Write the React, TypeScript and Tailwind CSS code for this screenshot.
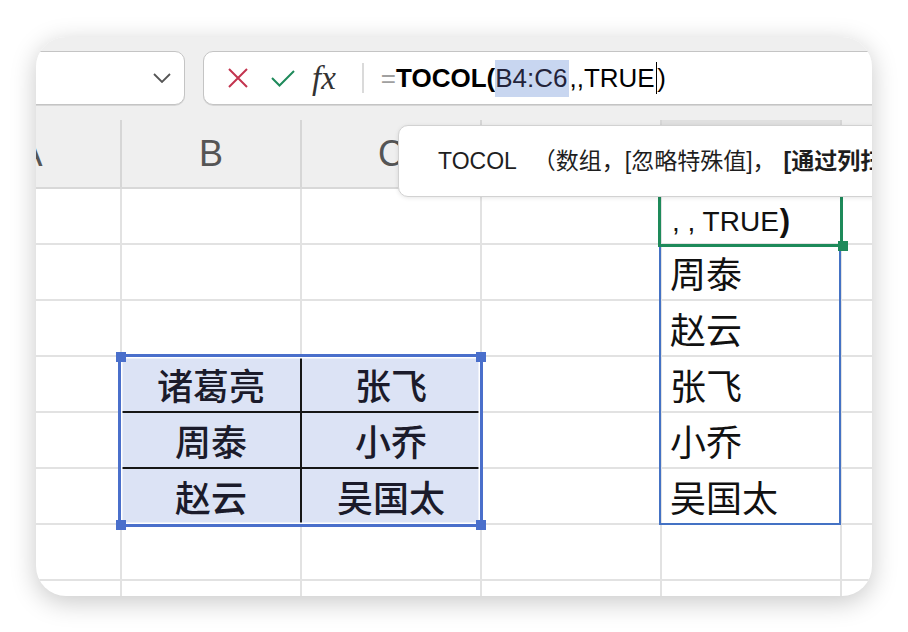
import clsx from "clsx";

type RowData = {
  b?: string;
  c?: string;
  e?: string;
  table?: boolean;
  blackBottom?: boolean;
  edit?: boolean;
};

const rows: RowData[] = [
  { edit: true },
  { e: "周泰" },
  { e: "赵云" },
  { b: "诸葛亮", c: "张飞", e: "张飞", table: true, blackBottom: true },
  { b: "周泰", c: "小乔", e: "小乔", table: true, blackBottom: true },
  { b: "赵云", c: "吴国太", e: "吴国太", table: true },
  {},
  {},
];

function TableCell({ text, blackBottom, blackRight }: { text?: string; blackBottom?: boolean; blackRight?: boolean }) {
  return (
    <div
      className={clsx(
        "w-[180px] shrink-0 flex items-center justify-center bg-[#dce3f5] border-r-2 border-b-2 text-[36px] leading-none font-medium text-[#1b1b2b] font-['Noto_Sans_CJK_SC',sans-serif]",
        blackRight ? "border-r-[#161616]" : "border-r-[#e2e2e2]",
        blackBottom ? "border-b-[#161616]" : "border-b-[#e2e2e2]"
      )}
    >
      {text}
    </div>
  );
}

function GridRow({ b, c, e, table, blackBottom, edit }: RowData) {
  return (
    <div className="flex h-[56px] shrink-0 -ml-[95px]">
      <div className="w-[181px] shrink-0 border-r-2 border-b-2 border-[#e2e2e2]" />
      {table ? (
        <>
          <TableCell text={b} blackBottom={blackBottom} blackRight />
          <TableCell text={c} blackBottom={blackBottom} />
        </>
      ) : (
        <>
          <div className="w-[180px] shrink-0 border-r-2 border-b-2 border-[#e2e2e2]" />
          <div className="w-[180px] shrink-0 border-r-2 border-b-2 border-[#e2e2e2]" />
        </>
      )}
      <div className="w-[180px] shrink-0 border-r-2 border-b-2 border-[#e2e2e2]" />
      <div className="w-[180px] shrink-0 border-r-2 border-b-2 border-[#e2e2e2] flex items-center">
        {edit ? (
          <span className="pl-[10px] pt-[8px] text-[28px] leading-none text-[#111] font-['Liberation_Sans',sans-serif] whitespace-pre">
            , , TRUE<span className="font-bold text-[31px] ml-[1px]">)</span>
          </span>
        ) : (
          <span className="pl-[8px] text-[36px] leading-none text-[#111] font-['Noto_Sans_CJK_SC',sans-serif]">{e}</span>
        )}
      </div>
      <div className="flex-1 border-b-2 border-[#e2e2e2]" />
    </div>
  );
}

function HeaderCell({ label, w, active }: { label: string; w: string; active?: boolean }) {
  return (
    <div
      className={clsx(
        "shrink-0 h-full flex items-center justify-center border-r-2 border-[#d6d6d6] text-[36px] leading-none text-[#555] font-['Liberation_Sans',sans-serif]",
        w,
        active ? "bg-[#e0e0e0]" : "bg-[#efefef]"
      )}
    >
      {label}
    </div>
  );
}

export default function App() {
  return (
    <div className="w-[908px] h-[632px] bg-white pt-[37px] pl-[36px]">
      <div className="relative w-[836px] h-[559px] rounded-[30px] overflow-hidden bg-white shadow-[0_6px_26px_rgba(0,0,0,0.22)] flex flex-col">
        {/* formula bar */}
        <div className="h-[83px] shrink-0 bg-[#efefef] flex items-start pt-[14px] gap-[18px]">
          <div className="-ml-[20px] w-[169px] h-[54px] shrink-0 bg-white rounded-[10px] border-[1.5px] border-[#c4c4c4] shadow-[0_1px_0_rgba(0,0,0,0.1)] flex items-center justify-end pr-[13px]">
            <svg width="18" height="10" viewBox="0 0 18 10" fill="none">
              <polyline points="1,1 9,9 17,1" stroke="#555" strokeWidth="1.8" />
            </svg>
          </div>
          <div className="flex-1 -mr-[20px] h-[54px] bg-white rounded-[10px] border-[1.5px] border-[#c4c4c4] shadow-[0_1px_0_rgba(0,0,0,0.1)] flex items-center">
            <svg className="ml-[24px] shrink-0" width="20" height="20" viewBox="0 0 20 20" fill="none">
              <path d="M1 1 L19 19 M19 1 L1 19" stroke="#c3344f" strokeWidth="2" />
            </svg>
            <svg className="ml-[23px] shrink-0" width="24" height="17" viewBox="0 0 24 17" fill="none">
              <polyline points="1,8 8.5,15.5 23,1" stroke="#1f8a5b" strokeWidth="2" />
            </svg>
            <span className="ml-[17px] text-[33px] leading-none italic text-[#333] font-['Liberation_Serif',serif]">
              fx
            </span>
            <div className="ml-[26px] w-[2px] h-[30px] bg-[#dadada]" />
            <div className="ml-[17px] flex items-center text-[26px] font-['Liberation_Sans',sans-serif] text-black">
              <span className="text-[#a0a0a0]">=</span>
              <span className="font-bold">TOCOL(</span>
              <span className="inline-block h-[37px] leading-[37px] bg-[#c8d6f0] text-[#23233a] pr-[2px]">B4:C6</span>
              <span>,,TRUE</span>
              <span className="inline-block w-[1.5px] h-[32px] bg-black ml-[1px]" />
              <span>)</span>
            </div>
          </div>
        </div>

        {/* column headers */}
        <div className="h-[69px] shrink-0 flex -ml-[95px] border-b-2 border-[#d8d8d8] bg-[#efefef]">
          <HeaderCell label="A" w="w-[181px]" />
          <HeaderCell label="B" w="w-[180px]" />
          <HeaderCell label="C" w="w-[180px]" />
          <HeaderCell label="D" w="w-[180px]" />
          <HeaderCell label="E" w="w-[180px]" active />
          <div className="flex-1 h-full bg-[#efefef]" />
        </div>

        {/* grid */}
        {rows.map((r, i) => (
          <GridRow key={i} {...r} />
        ))}

        {/* source range selection */}
        <div className="absolute left-[82px] top-[317px] w-[365px] h-[173px] border-[3px] border-[#4a6fcb] shadow-[inset_0_0_0_1.5px_white]" />
        <div className="absolute left-[80px] top-[315px] w-[10px] h-[10px] bg-[#4a6fcb]" />
        <div className="absolute left-[440px] top-[315px] w-[10px] h-[10px] bg-[#4a6fcb]" />
        <div className="absolute left-[80px] top-[483px] w-[10px] h-[10px] bg-[#4a6fcb]" />
        <div className="absolute left-[440px] top-[483px] w-[10px] h-[10px] bg-[#4a6fcb]" />

        {/* spill range */}
        <div className="absolute left-[623px] top-[208px] w-[182px] h-[280px] border-2 border-[#4472c4]" />

        {/* active cell */}
        <div className="absolute left-[622px] top-[149px] w-[185px] h-[61px] border-[3px] border-[#1e8a5a]" />
        <div className="absolute left-[802px] top-[204px] w-[10px] h-[10px] bg-[#1e8a5a]" />

        <div className="absolute left-[749px] top-[151px] w-[5px] h-[1.5px] bg-[#333]" />
        <div className="absolute left-[749px] top-[155px] w-[5px] h-[1.5px] bg-[#333]" />

        {/* function tooltip */}
        <div className="absolute left-[362px] top-[88px] w-[600px] h-[72px] bg-white rounded-[10px] border-[1.5px] border-[#d2d2d2] shadow-[0_1px_4px_rgba(0,0,0,0.1)] flex items-center pl-[39px] whitespace-nowrap text-[23px] text-[#1e1e1e] font-['Liberation_Sans','Noto_Sans_CJK_SC',sans-serif]">
          <span className="mr-[16px]">TOCOL</span>
          <span>（数组，[忽略特殊值]，</span>
          <span className="font-bold ml-[8px]">[通过列扫描]）</span>
        </div>
      </div>
    </div>
  );
}
